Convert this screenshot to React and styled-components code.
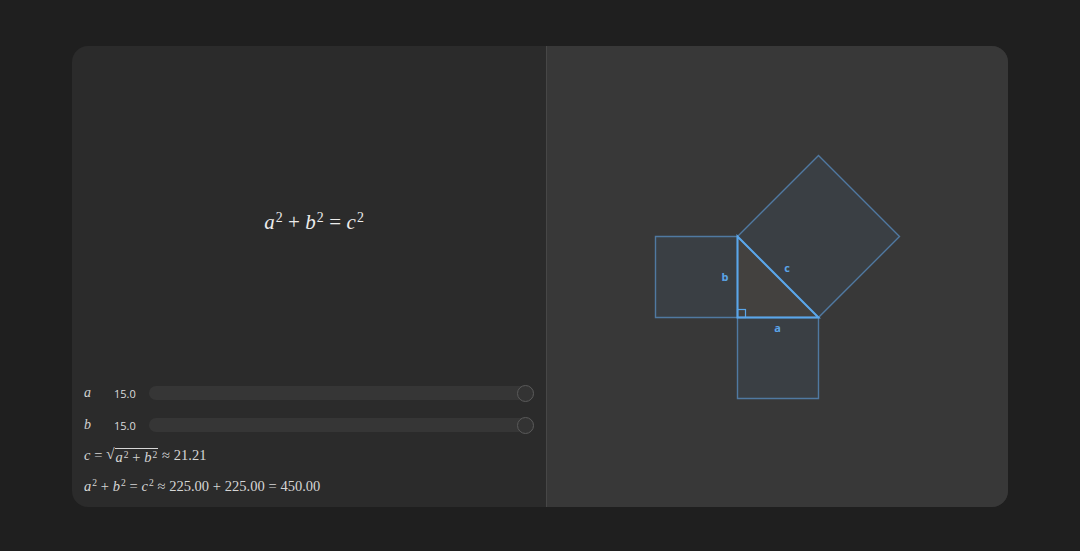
import React from "react";
import styled, { createGlobalStyle } from "styled-components";

const Global = createGlobalStyle`
  html, body { margin: 0; padding: 0; background: #1f1f1f; }
  body { font-family: "Open Sans", "Noto Sans", sans-serif; }
`;

const Page = styled.div`
  min-height: 100vh;
  box-sizing: border-box;
  padding-top: 2px;
  display: flex;
  align-items: center;
  justify-content: center;
`;

const Card = styled.div`
  width: 936px;
  height: 461px;
  border-radius: 16px;
  overflow: hidden;
  display: flex;
  background: #2b2b2b;
`;

const LeftPane = styled.div`
  width: 475px;
  display: flex;
  flex-direction: column;
  border-right: 1px solid #474747;
  box-sizing: border-box;
`;

const FormulaArea = styled.div`
  flex: 1;
  display: flex;
  align-items: center;
  justify-content: center;
  padding-left: 10px;
  padding-top: 22px;
`;

const MathText = styled.span`
  font-family: "Liberation Serif", "DejaVu Serif", serif;
  font-size: ${(p) => p.$size || 15}px;
  color: ${(p) => p.$color || "#d6d6d6"};
  white-space: nowrap;
  line-height: 1;
`;

const V = styled.i`
  font-style: italic;
`;

const Sup = styled.sup`
  font-size: 0.66em;
  vertical-align: 0;
  position: relative;
  top: -0.48em;
  font-style: normal;
  margin-left: 1px;
`;

const Op = styled.span`
  margin: 0 0.26em;
`;

const Radical = styled.span`
  display: inline-flex;
  align-items: flex-start;
`;

const RootSign = styled.span`
  font-size: 1.05em;
  line-height: 1;
  position: relative;
  top: -1px;
`;

const RootBody = styled.span`
  border-top: 1px solid currentColor;
  padding: 1px 1px 0 1px;
  margin-top: 1px;
  line-height: 1;
`;

const Controls = styled.div`
  display: flex;
  flex-direction: column;
  padding: 0 12px 6px 12px;
`;

const SliderRow = styled.div`
  display: flex;
  align-items: center;
  height: 32px;
`;

const VarLabel = styled.span`
  width: 30px;
  font-family: "Liberation Serif", "DejaVu Serif", serif;
  font-style: italic;
  font-size: 14px;
  color: #d2d2d2;
`;

const Value = styled.span`
  width: 35px;
  font-family: "Open Sans", "Noto Sans", sans-serif;
  font-size: 11px;
  color: #dcdcdc;
`;

const Track = styled.div`
  flex: 1;
  height: 14px;
  border-radius: 7px;
  background: #363636;
  position: relative;
`;

const Thumb = styled.div`
  position: absolute;
  right: 0;
  top: 50%;
  width: 15px;
  height: 15px;
  margin-top: -8.5px;
  border-radius: 50%;
  border: 1px solid #5a5a5a;
  background: #333333;
`;

const EqRow = styled.div`
  height: 30px;
  display: flex;
  align-items: center;
`;

const RightPane = styled.div`
  flex: 1;
  background: #383838;
  display: flex;
  align-items: center;
  justify-content: center;
`;

const Figure = styled.svg`
  width: 260px;
  height: 260px;
  display: block;
  overflow: visible;
`;

const SideLabel = styled.text`
  font-family: "Open Sans", "Noto Sans", sans-serif;
  font-size: 11px;
  font-weight: 700;
  fill: #5ba4e8;
`;

function Slider({ name, value }) {
  return (
    <SliderRow>
      <VarLabel>{name}</VarLabel>
      <Value>{value}</Value>
      <Track>
        <Thumb />
      </Track>
    </SliderRow>
  );
}

const sq = {
  fill: "rgba(90,160,230,0.07)",
  stroke: "rgba(96,160,222,0.62)",
  strokeWidth: 1.4,
};

export default function App() {
  return (
    <>
      <Global />
      <Page>
        <Card>
          <LeftPane>
            <FormulaArea>
              <MathText $size={21} $color="#ececec">
                <V>a</V>
                <Sup>2</Sup>
                <Op>+</Op>
                <V>b</V>
                <Sup>2</Sup>
                <Op>=</Op>
                <V>c</V>
                <Sup>2</Sup>
              </MathText>
            </FormulaArea>
            <Controls>
              <Slider name="a" value="15.0" />
              <Slider name="b" value="15.0" />
              <EqRow>
                <MathText $size={14.5}>
                  <V>c</V>
                  <Op>=</Op>
                  <Radical>
                    <RootSign>√</RootSign>
                    <RootBody>
                      <V>a</V>
                      <Sup>2</Sup>
                      <Op>+</Op>
                      <V>b</V>
                      <Sup>2</Sup>
                    </RootBody>
                  </Radical>
                  <Op>≈</Op>
                  21.21
                </MathText>
              </EqRow>
              <EqRow>
                <MathText $size={14.5}>
                  <V>a</V>
                  <Sup>2</Sup>
                  <Op>+</Op>
                  <V>b</V>
                  <Sup>2</Sup>
                  <Op>=</Op>
                  <V>c</V>
                  <Sup>2</Sup>
                  <Op>≈</Op>
                  225.00
                  <Op>+</Op>
                  225.00
                  <Op>=</Op>
                  450.00
                </MathText>
              </EqRow>
            </Controls>
          </LeftPane>
          <RightPane>
            <Figure viewBox="0 0 260 260">
              <polygon points="170.5,170.5 89.5,170.5 89.5,251.5 170.5,251.5" {...sq} />
              <polygon points="89.5,89.5 89.5,170.5 7.5,170.5 7.5,89.5" {...sq} />
              <polygon points="89.5,89.5 170.5,170.5 251.5,89.5 170.5,8.5" {...sq} />
              <polygon
                points="89.5,89.5 89.5,170.5 170.5,170.5"
                fill="rgba(255,215,195,0.06)"
                stroke="#5aa6ea"
                strokeWidth="2"
                strokeLinejoin="miter"
              />
              <rect x="89.5" y="162.5" width="8" height="8" fill="none" stroke="#5aa6ea" strokeWidth="1.2" />
              <SideLabel x="129.5" y="184.5" textAnchor="middle">a</SideLabel>
              <SideLabel x="77" y="133.5" textAnchor="middle">b</SideLabel>
              <SideLabel x="139" y="125" textAnchor="middle">c</SideLabel>
            </Figure>
          </RightPane>
        </Card>
      </Page>
    </>
  );
}
